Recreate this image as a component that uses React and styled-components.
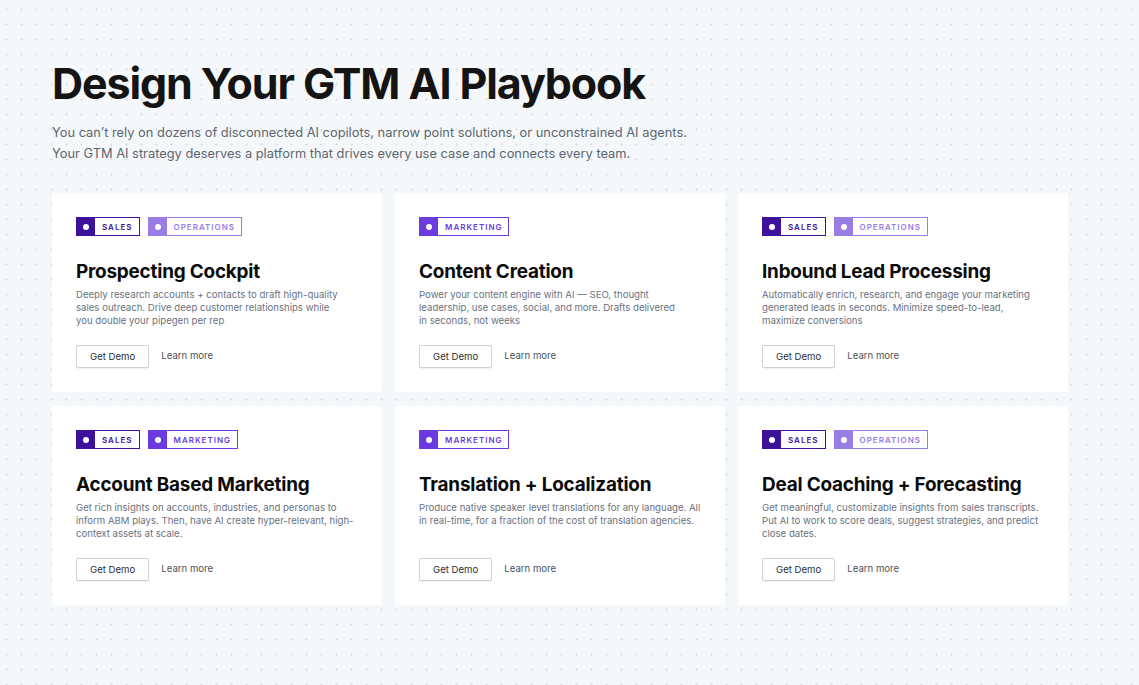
import React from "react";
import styled, { createGlobalStyle } from "styled-components";

const tagColors = {
  sales: "#3d1199",
  marketing: "#6c3be0",
  operations: "#9a7de4"
};

const GlobalStyle = createGlobalStyle`
  html, body {
    margin: 0;
    padding: 0;
  }
  body {
    font-family: Inter, "Noto Sans", sans-serif;
    background-color: #f5f8fa;
    background-image: radial-gradient(circle, #d3d9de 0.8px, transparent 1.2px);
    background-size: 15px 15px;
    background-position: -1px 2px;
    -webkit-font-smoothing: antialiased;
  }
`;

const Page = styled.main`
  width: 1139px;
  min-height: 685px;
  box-sizing: border-box;
  padding: 57px 0 0 52px;
`;

const Heading = styled.h1`
  margin: 0;
  font-size: 43px;
  font-weight: 700;
  letter-spacing: -1.1px;
  color: #141414;
  line-height: 52px;
`;

const Lead = styled.p`
  margin: 13px 0 0;
  font-size: 12.85px;
  line-height: 21px;
  color: #5d6570;
`;

const Grid = styled.div`
  margin-top: 29px;
  display: grid;
  grid-template-columns: repeat(3, 330px);
  grid-auto-rows: 199px;
  column-gap: 13px;
  row-gap: 14px;
`;

const Card = styled.section`
  background: #ffffff;
  border-radius: 2px;
  padding: 24px 24px 0;
  box-sizing: border-box;
  display: flex;
  flex-direction: column;
`;

const Tags = styled.div`
  display: flex;
  gap: 8px;
`;

const Tag = styled.span`
  display: inline-flex;
  align-items: stretch;
  height: 19px;
  box-sizing: border-box;
  border: 1px solid ${p => tagColors[p.$kind]};
  color: ${p => tagColors[p.$kind]};
  font-size: 8px;
  font-weight: 600;
  letter-spacing: 1px;
  text-transform: uppercase;
`;

const TagDot = styled.span`
  width: 18px;
  background: ${p => tagColors[p.$kind]};
  display: flex;
  align-items: center;
  justify-content: center;
  &::after {
    content: "";
    width: 6px;
    height: 6px;
    border-radius: 50%;
    background: #ffffff;
  }
`;

const TagLabel = styled.span`
  display: flex;
  align-items: center;
  padding: 0 6px 0 7px;
`;

const Title = styled.h2`
  margin: 24px 0 0;
  font-size: 18.9px;
  font-weight: 700;
  letter-spacing: -0.2px;
  line-height: 23px;
  color: #0b0b0b;
`;

const Body = styled.p`
  margin: 5px 0 0;
  font-size: 9.6px;
  line-height: 13px;
  color: #6a7280;
  max-width: ${p => p.$measure}px;
`;

const Actions = styled.div`
  margin-top: auto;
  margin-bottom: 24px;
  display: flex;
  align-items: center;
  gap: 12px;
`;

const DemoButton = styled.button`
  height: 23px;
  padding: 0 13px;
  background: #ffffff;
  border: 1px solid #c9d1d9;
  border-radius: 2px;
  box-shadow: 0 1px 1px rgba(0, 0, 0, 0.06);
  font-family: inherit;
  font-size: 9.6px;
  color: #2b2f36;
`;

const LearnLink = styled.a`
  font-size: 9.6px;
  color: #4b525c;
  text-decoration: none;
  margin-bottom: 2px;
`;

const plays = [
  {
    tags: ["sales", "operations"],
    title: "Prospecting Cockpit",
    measure: 268,
    body: "Deeply research accounts + contacts to draft high-quality sales outreach. Drive deep customer relationships while you double your pipegen per rep"
  },
  {
    tags: ["marketing"],
    title: "Content Creation",
    measure: 264,
    body: "Power your content engine with AI — SEO, thought leadership, use cases, social, and more. Drafts delivered in seconds, not weeks"
  },
  {
    tags: ["sales", "operations"],
    title: "Inbound Lead Processing",
    measure: 270,
    body: "Automatically enrich, research, and engage your marketing generated leads in seconds. Minimize speed-to-lead, maximize conversions"
  },
  {
    tags: ["sales", "marketing"],
    title: "Account Based Marketing",
    measure: 285,
    body: "Get rich insights on accounts, industries, and personas to inform ABM plays. Then, have AI create hyper-relevant, high-context assets at scale."
  },
  {
    tags: ["marketing"],
    title: "Translation + Localization",
    measure: 285,
    body: "Produce native speaker level translations for any language. All in real-time, for a fraction of the cost of translation agencies."
  },
  {
    tags: ["sales", "operations"],
    title: "Deal Coaching + Forecasting",
    measure: 285,
    body: "Get meaningful, customizable insights from sales transcripts. Put AI to work to score deals, suggest strategies, and predict close dates."
  }
];

export default function App() {
  return (
    <>
      <GlobalStyle />
      <Page>
        <Heading>Design Your GTM AI Playbook</Heading>
        <Lead>
          You can’t rely on dozens of disconnected AI copilots, narrow point solutions, or unconstrained AI agents.
          <br />
          Your GTM AI strategy deserves a platform that drives every use case and connects every team.
        </Lead>
        <Grid>
          {plays.map(play => (
            <Card key={play.title}>
              <Tags>
                {play.tags.map(t => (
                  <Tag key={t} $kind={t}>
                    <TagDot $kind={t} />
                    <TagLabel>{t}</TagLabel>
                  </Tag>
                ))}
              </Tags>
              <Title>{play.title}</Title>
              <Body $measure={play.measure}>{play.body}</Body>
              <Actions>
                <DemoButton>Get Demo</DemoButton>
                <LearnLink href="#">Learn more</LearnLink>
              </Actions>
            </Card>
          ))}
        </Grid>
      </Page>
    </>
  );
}
